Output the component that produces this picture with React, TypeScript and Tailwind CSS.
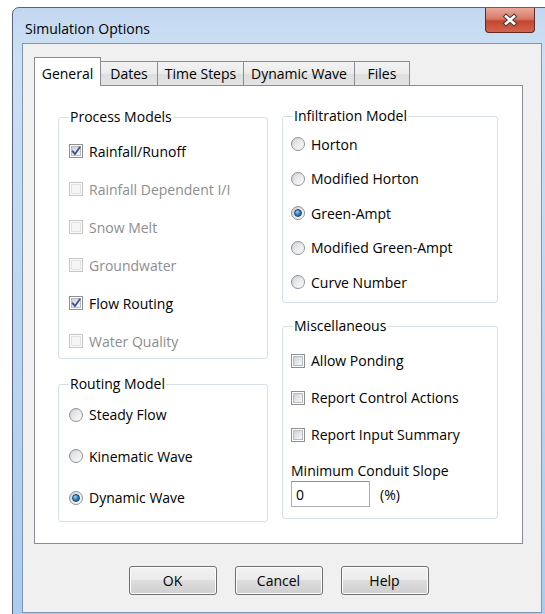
import React from 'react';

type Item = { label: string; checked?: boolean; disabled?: boolean };

const PROCESS_MODELS: Item[] = [
  { label: 'Rainfall/Runoff', checked: true },
  { label: 'Rainfall Dependent I/I', disabled: true },
  { label: 'Snow Melt', disabled: true },
  { label: 'Groundwater', disabled: true },
  { label: 'Flow Routing', checked: true },
  { label: 'Water Quality', disabled: true },
];

const ROUTING_MODELS: Item[] = [
  { label: 'Steady Flow' },
  { label: 'Kinematic Wave' },
  { label: 'Dynamic Wave', checked: true },
];

const INFILTRATION_MODELS: Item[] = [
  { label: 'Horton' },
  { label: 'Modified Horton' },
  { label: 'Green-Ampt', checked: true },
  { label: 'Modified Green-Ampt' },
  { label: 'Curve Number' },
];

const MISC_OPTIONS: Item[] = [
  { label: 'Allow Ponding' },
  { label: 'Report Control Actions' },
  { label: 'Report Input Summary' },
];

const TABS = [
  { label: 'General', width: 'w-[67px]' },
  { label: 'Dates', width: 'w-[57px]' },
  { label: 'Time Steps', width: 'w-[86px]' },
  { label: 'Dynamic Wave', width: 'w-[111px]' },
  { label: 'Files', width: 'w-[55px]' },
];

function CheckBox({ checked, disabled }: { checked?: boolean; disabled?: boolean }) {
  return (
    <span
      className={`relative block w-[14px] h-[14px] shrink-0 border ${
        disabled ? 'border-[#c6c6c6] bg-[#fafafa]' : 'border-[#8e8f8f] bg-white'
      }`}
    >
      <span
        className={`absolute inset-[1px] border ${
          disabled
            ? 'border-[#e2e2e2] bg-[#f5f5f5]'
            : 'border-[#b8bcc2] bg-[linear-gradient(135deg,#cdd1d6_0%,#e6e8eb_55%,#f8f8f8_100%)]'
        }`}
      />
      {checked && (
        <svg viewBox="0 0 14 14" className="absolute -left-px -top-px w-[14px] h-[14px]">
          <path d="M3.5 7.2 L6 10 L10.8 3.2" fill="none" stroke="#3f569a" strokeWidth="1.9" strokeLinecap="round" strokeLinejoin="round" />
        </svg>
      )}
    </span>
  );
}

function Radio({ checked }: { checked?: boolean }) {
  return (
    <span className="relative block w-[14px] h-[14px] shrink-0 rounded-full border border-[#8f9194] bg-[linear-gradient(135deg,#c9cbcf_0%,#e9eaec_50%,#ffffff_100%)]">
      <span className="absolute inset-[2px] rounded-full bg-[linear-gradient(135deg,#dcdee1_0%,#f7f7f7_100%)]" />
      {checked && (
        <span className="absolute inset-[2px] rounded-full border border-[#1c3f63] bg-[radial-gradient(circle_at_35%_30%,#9ad4f8_0%,#3c8ed0_40%,#14508a_100%)]" />
      )}
    </span>
  );
}

function GroupBox({
  title,
  className,
  children,
}: {
  title: string;
  className: string;
  children: React.ReactNode;
}) {
  return (
    <div className={`relative rounded-[3px] border border-[#d5dfe5] ${className}`}>
      <span className="absolute left-[10px] -top-[11px] bg-white px-px leading-[20px] text-[#000]">{title}</span>
      {children}
    </div>
  );
}

function OptionRow({ item, kind, rowClass }: { item: Item; kind: 'check' | 'radio'; rowClass: string }) {
  return (
    <div className={`flex items-center gap-[6px] ${rowClass}`}>
      {kind === 'check' ? <CheckBox checked={item.checked} disabled={item.disabled} /> : <Radio checked={item.checked} />}
      <span className={item.disabled ? 'text-[#8d8d8d]' : 'text-[#000]'}>{item.label}</span>
    </div>
  );
}

function DialogButton({ label }: { label: string }) {
  return (
    <button className="w-[88px] h-[29px] rounded-[3px] border border-[#707070] bg-[linear-gradient(to_bottom,#f2f2f2_0%,#ebebeb_50%,#dddddd_50%,#cfcfcf_100%)] shadow-[inset_0_0_0_1px_#fcfcfc] text-[#000]">
      {label}
    </button>
  );
}

export default function App() {
  return (
    <div className="w-[545px] h-[614px] overflow-hidden bg-white text-[14px] font-['Open_Sans',sans-serif]">
      {/* Aero window frame */}
      <div className="relative ml-[12px] mt-[7px] w-[545px] h-[620px] rounded-t-[7px] border border-[#56657a] bg-[linear-gradient(to_bottom,#c3d8f0_0%,#cde0f5_8%,#b9d5f1_60%,#a9ccf0_100%)]">
        {/* Title bar */}
        <div className="h-[35px] flex items-center pl-[12px] pt-[5px] text-[#000]">
          Simulation Options
        </div>

        {/* Close button */}
        <div className="absolute left-[472px] top-0 w-[50px] h-[25px] rounded-b-[4px] border border-t-0 border-[#5e2a22] bg-[linear-gradient(to_bottom,#e9a99a_0%,#d77a66_45%,#c4452f_55%,#d2654e_100%)] flex items-center justify-center">
          <svg viewBox="0 0 16 14" className="w-[16px] h-[14px]">
            <path d="M4 3.5 L12 10.5 M12 3.5 L4 10.5" stroke="#3e3e3e" strokeWidth="4.6" strokeLinecap="square" />
            <path d="M4 3.5 L12 10.5 M12 3.5 L4 10.5" stroke="#ffffff" strokeWidth="2.6" strokeLinecap="square" />
          </svg>
        </div>

        {/* Client area */}
        <div className="ml-[9px] w-[520px] h-[570px] border border-[#8396ac] bg-[#f0f0f0]">
          <div className="ml-[11px] mt-[13px] w-[489px]">
            {/* Tab strip */}
            <div className="flex items-end h-[28px]">
              {TABS.map((tab, i) =>
                i === 0 ? (
                  <div
                    key={tab.label}
                    className={`relative z-10 -mb-px h-[29px] ${tab.width} flex items-center justify-center pt-[3px] border border-b-0 border-[#898c95] bg-white text-[#000]`}
                  >
                    {tab.label}
                  </div>
                ) : (
                  <div
                    key={tab.label}
                    className={`h-[24px] ${tab.width} flex items-center justify-center border border-b-0 border-l-0 border-[#898c95] bg-[linear-gradient(to_bottom,#f3f3f3_0%,#ebebeb_50%,#dedede_51%,#e4e4e4_100%)] text-[#000]`}
                  >
                    {tab.label}
                  </div>
                ),
              )}
            </div>

            {/* Tab page */}
            <div className="h-[459px] border border-[#898c95] bg-white flex gap-[14px] pl-[23px] pt-[30px]">
              <div className="w-[210px] pt-px flex flex-col gap-[25px]">
                <GroupBox title="Process Models" className="h-[242px] pt-[14px] pl-[10px]">
                  {PROCESS_MODELS.map((item) => (
                    <OptionRow key={item.label} item={item} kind="check" rowClass="h-[38px]" />
                  ))}
                </GroupBox>
                <GroupBox title="Routing Model" className="h-[138px] pt-[9px] pl-[10px]">
                  {ROUTING_MODELS.map((item) => (
                    <OptionRow key={item.label} item={item} kind="radio" rowClass="h-[41.5px]" />
                  ))}
                </GroupBox>
              </div>

              <div className="w-[216px] flex flex-col gap-[23px]">
                <GroupBox title="Infiltration Model" className="h-[187px] pt-[10px] pl-[8px]">
                  {INFILTRATION_MODELS.map((item) => (
                    <OptionRow key={item.label} item={item} kind="radio" rowClass="h-[34.5px]" />
                  ))}
                </GroupBox>
                <GroupBox title="Miscellaneous" className="h-[193px] pt-[15px] pl-[8px]">
                  {MISC_OPTIONS.map((item) => (
                    <OptionRow key={item.label} item={item} kind="check" rowClass="h-[37px]" />
                  ))}
                  <div className="mt-[8px] leading-[20px] text-[#000]">Minimum Conduit Slope</div>
                  <div className="flex items-center gap-[10px]">
                    <div className="w-[79px] h-[26px] border border-[#abadb3] border-t-[#8e9099] bg-white pl-[4px] flex items-center text-[#000]">
                      0
                    </div>
                    <span className="text-[#000]">(%)</span>
                  </div>
                </GroupBox>
              </div>
            </div>

            {/* Dialog buttons */}
            <div className="mt-[22px] flex justify-center gap-[18px]">
              <DialogButton label="OK" />
              <DialogButton label="Cancel" />
              <DialogButton label="Help" />
            </div>
          </div>
        </div>
      </div>
    </div>
  );
}
